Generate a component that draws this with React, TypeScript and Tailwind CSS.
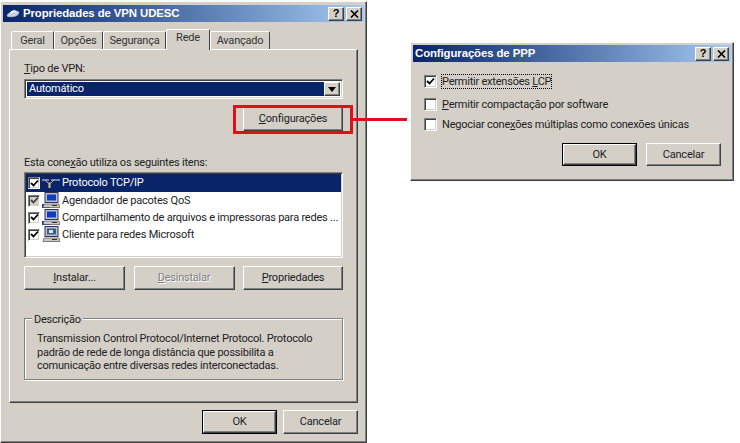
import type { ReactNode } from 'react';

const bevel = 'border border-t-white border-l-white border-b-[#404040] border-r-[#404040] shadow-[inset_-1px_-1px_0_#808080]';
const sunken = 'border border-t-[#808080] border-l-[#808080] border-b-white border-r-white shadow-[inset_1px_1px_0_#404040,inset_-1px_-1px_0_#d4d0c8]';

function Btn({ children, className = '', isDefault = false, disabled = false }: { children: ReactNode; className?: string; isDefault?: boolean; disabled?: boolean }) {
  return (
    <div className={`flex items-center justify-center bg-[#d4d0c8] ${isDefault ? 'border border-black' : ''} ${disabled ? 'text-[#808080] [text-shadow:1px_1px_0_#fff]' : 'text-[#222]'} ${className}`}>
      <div className={`flex h-full w-full items-center justify-center pt-px ${bevel}`}>{children}</div>
    </div>
  );
}

function TitleBar({ title, icon }: { title: string; icon?: boolean }) {
  return (
    <div className="flex h-[17px] items-center bg-gradient-to-r from-[#0a246a] to-[#a6caf0] pl-[2px] pr-[2px] font-['Liberation_Sans',sans-serif] tracking-normal">
      {icon && <CloudIcon />}
      <span className={`${icon ? 'ml-[3px]' : ''} text-[11.4px] font-bold leading-none tracking-[-0.1px] text-white`}>{title}</span>
      <div className="ml-auto flex">
        <div className={`flex h-[14px] w-[16px] items-center justify-center bg-[#d4d0c8] text-[11px] font-bold leading-none text-black ${bevel}`}>?</div>
        <div className={`ml-[2px] flex h-[14px] w-[16px] items-center justify-center bg-[#d4d0c8] ${bevel}`}>
          <svg width="9" height="8" viewBox="0 0 9 8">
            <path d="M1 0.5 L8 7.5 M8 0.5 L1 7.5" stroke="#000" strokeWidth="1.6" />
          </svg>
        </div>
      </div>
    </div>
  );
}

function CloudIcon() {
  return (
    <svg width="14" height="11" viewBox="0 0 16 12" className="ml-[1px]">
      <path d="M1 9 C1 6 4 5 5 5 C6 2 10 1 12 3 C15 3 16 5 14 7 C12 10 4 11 1 9 Z" fill="#c8d2e0" stroke="#6d7f9f" strokeWidth="0.5" />
      <path d="M4 6 C6 4 9 3 12 4" stroke="#fff" strokeWidth="1.2" fill="none" />
    </svg>
  );
}

function Check({ checked = true, gray = false, small = false }: { checked?: boolean; gray?: boolean; small?: boolean }) {
  return (
    <div className={`flex shrink-0 items-center justify-center ${small ? 'h-[12px] w-[12px]' : 'h-[13px] w-[13px]'} ${gray ? 'bg-[#d4d0c8]' : 'bg-white'} ${sunken}`}>
      {checked && (
        <svg width="9" height="9" viewBox="0 0 9 9">
          <path d="M1 4 L3.5 6.5 L8 1.5" stroke={gray ? '#404040' : '#000'} strokeWidth="1.8" fill="none" />
        </svg>
      )}
    </div>
  );
}

function ConnectorIcon() {
  return (
    <svg width="18" height="16" viewBox="0 0 18 16" className="shrink-0">
      <path d="M0 5 H7 M9 5 H18" stroke="#e8e8e8" strokeWidth="1" />
      <path d="M3 5 L6 8 H9 L12 5" stroke="#c8b878" strokeWidth="1" fill="none" />
      <path d="M7.5 8 V13" stroke="#d8c888" strokeWidth="2" />
    </svg>
  );
}

function ComputerIcon({ client = false }: { client?: boolean }) {
  return (
    <svg width="18" height="17" viewBox="0 0 18 17" className="shrink-0">
      {!client && <rect x="0" y="12" width="8" height="4" fill="#1c2fa8" />}
      <rect x="3" y="0.5" width="13" height="10" fill="#c0c0c0" stroke="#303060" />
      <rect x="5" y="2.5" width="9" height="6" fill={client ? '#3a5a9a' : '#0a40c0'} />
      {client && <path d="M7 4 H11 V7 H7 Z" fill="#d8e8ff" />}
      <path d="M2 12 H17 L18 15.5 H1 Z" fill="#c8c8c8" stroke="#505050" strokeWidth="0.7" />
      <path d="M10 13.5 H15" stroke="#303030" />
    </svg>
  );
}

function Row({ label, icon, selected = false, gray = false, first = false }: { label: string; icon: ReactNode; selected?: boolean; gray?: boolean; first?: boolean }) {
  return (
    <div className={`flex items-center pl-[2px] ${first ? 'h-[18px]' : 'h-[17px]'} ${selected ? 'bg-[#0a246a] text-white' : 'text-[#222]'}`}>
      <Check gray={gray} small />
      <div className="ml-[2px] w-[18px]">{icon}</div>
      <span className="ml-[2px] whitespace-nowrap pt-px">{label}</span>
    </div>
  );
}

const tabs = [
  { label: 'Geral', w: 'w-[43px]' },
  { label: 'Opções', w: 'w-[49px]' },
  { label: 'Segurança', w: 'w-[63px]' },
  { label: 'Rede', w: 'w-[44px]', active: true },
  { label: 'Avançado', w: 'w-[60px]' },
];

function PropertiesWindow() {
  return (
    <div className={`absolute left-0 top-[1px] h-[442px] w-[367px] bg-[#d4d0c8] px-[2px] pt-[3px] ${bevel}`}>
      <TitleBar title="Propriedades de VPN UDESC" icon />
      <div className="relative z-10 ml-[8px] mt-[7px] flex h-[20px] items-end">
        {tabs.map((t) => (
          <div
            key={t.label}
            className={`flex items-center justify-center rounded-t-[2px] border-l border-t border-r border-l-white border-t-white border-r-[#404040] bg-[#d4d0c8] text-[#333] ${t.w} ${t.active ? '-mb-px h-[21px] pb-[3px]' : 'h-[18px] pt-px'}`}
          >
            {t.label}
          </div>
        ))}
      </div>
      <div className={`ml-[6px] flex h-[354px] w-[349px] flex-col px-[14px] ${bevel}`}>
        <div className="mt-[12px] h-[14px] leading-[14px]"><u>T</u>ipo de VPN:</div>
        <div className={`mt-[3px] flex h-[20px] w-[319px] bg-white p-[2px] ${sunken}`}>
          <div className="flex flex-1 items-center bg-[#0a246a] pl-[2px] pt-px text-white">Automático</div>
          <div className={`flex w-[16px] items-center justify-center bg-[#d4d0c8] ${bevel}`}>
            <svg width="8" height="5" viewBox="0 0 8 5"><path d="M0 0 H8 L4 5 Z" fill="#000" /></svg>
          </div>
        </div>
        <div className="mt-[8px] flex justify-end">
          <Btn className="h-[24px] w-[100px]"><span><u>C</u>onfigurações</span></Btn>
        </div>
        <div className="mt-[25px] h-[14px] leading-[14px]">Esta cone<u>x</u>ão utiliza os seguintes itens:</div>
        <div className={`mt-[2px] h-[86px] w-[319px] overflow-hidden bg-white p-[1px] ${sunken}`}>
          <Row label="Protocolo TCP/IP" icon={<ConnectorIcon />} selected first />
          <Row label="Agendador de pacotes QoS" icon={<ComputerIcon />} gray />
          <Row label="Compartilhamento de arquivos e impressoras para redes ..." icon={<ComputerIcon />} />
          <Row label="Cliente para redes Microsoft" icon={<ComputerIcon client />} />
        </div>
        <div className="mt-[8px] flex justify-between">
          <Btn className="h-[24px] w-[101px]"><span><u>I</u>nstalar...</span></Btn>
          <Btn className="h-[24px] w-[101px]" disabled><span><u>D</u>esinstalar</span></Btn>
          <Btn className="h-[24px] w-[100px]"><span><u>P</u>ropriedades</span></Btn>
        </div>
        <div className="relative mt-[28px] h-[62px] w-[319px] border border-[#808080] pl-[12px] pt-[13px] shadow-[inset_1px_1px_0_#fff,1px_1px_0_#fff]">
          <span className="absolute left-[7px] top-[-6px] bg-[#d4d0c8] px-[2px] leading-[14px]">Descrição</span>
          <p className="leading-[13.5px]">
            Transmission Control Protocol/Internet Protocol. Protocolo<br />
            padrão de rede de longa distância que possibilita a<br />
            comunicação entre diversas redes interconectadas.
          </p>
        </div>
      </div>
      <div className="mt-[7px] flex justify-end gap-[6px] pr-[6px]">
        <Btn className="h-[24px] w-[75px]" isDefault>OK</Btn>
        <Btn className="h-[24px] w-[75px]">Cancelar</Btn>
      </div>
    </div>
  );
}

function PppWindow() {
  return (
    <div className={`absolute left-[410px] top-[42px] h-[139px] w-[324px] bg-[#d4d0c8] px-[2px] pt-[2px] ${bevel}`}>
      <TitleBar title="Configurações de PPP" />
      <div className="flex flex-col pl-[11px] pt-[13px]">
        <div className="flex h-[13px] items-center">
          <Check />
          <span className="ml-[4px] border border-dotted border-black leading-[13px]">Permitir extensões <u>L</u>CP</span>
        </div>
        <div className="mt-[10px] flex h-[13px] items-center">
          <Check checked={false} />
          <span className="ml-[5px] pt-px"><u>P</u>ermitir compactação por software</span>
        </div>
        <div className="mt-[7px] flex h-[13px] items-center">
          <Check checked={false} />
          <span className="ml-[5px] pt-[2px]">Negociar cone<u>x</u>ões múltiplas como conexões únicas</span>
        </div>
      </div>
      <div className="mt-[12px] flex justify-end gap-[9px] pr-[10px]">
        <Btn className="h-[23px] w-[75px]" isDefault>OK</Btn>
        <Btn className="h-[23px] w-[75px]">Cancelar</Btn>
      </div>
    </div>
  );
}

export default function App() {
  return (
    <div className="relative h-[443px] w-[740px] overflow-hidden bg-white font-['Roboto',sans-serif] text-[11px] tracking-[-0.22px] text-[#222]">
      <PropertiesWindow />
      <PppWindow />
      {/* red callout over the Configuracoes button */}
      <div className="absolute left-[233px] top-[105px] h-[29px] w-[120px] border-[3px] border-[#e0101a]" />
      <div className="absolute left-[353px] top-[118px] h-[3px] w-[54px] bg-[#e0101a]" />
    </div>
  );
}
